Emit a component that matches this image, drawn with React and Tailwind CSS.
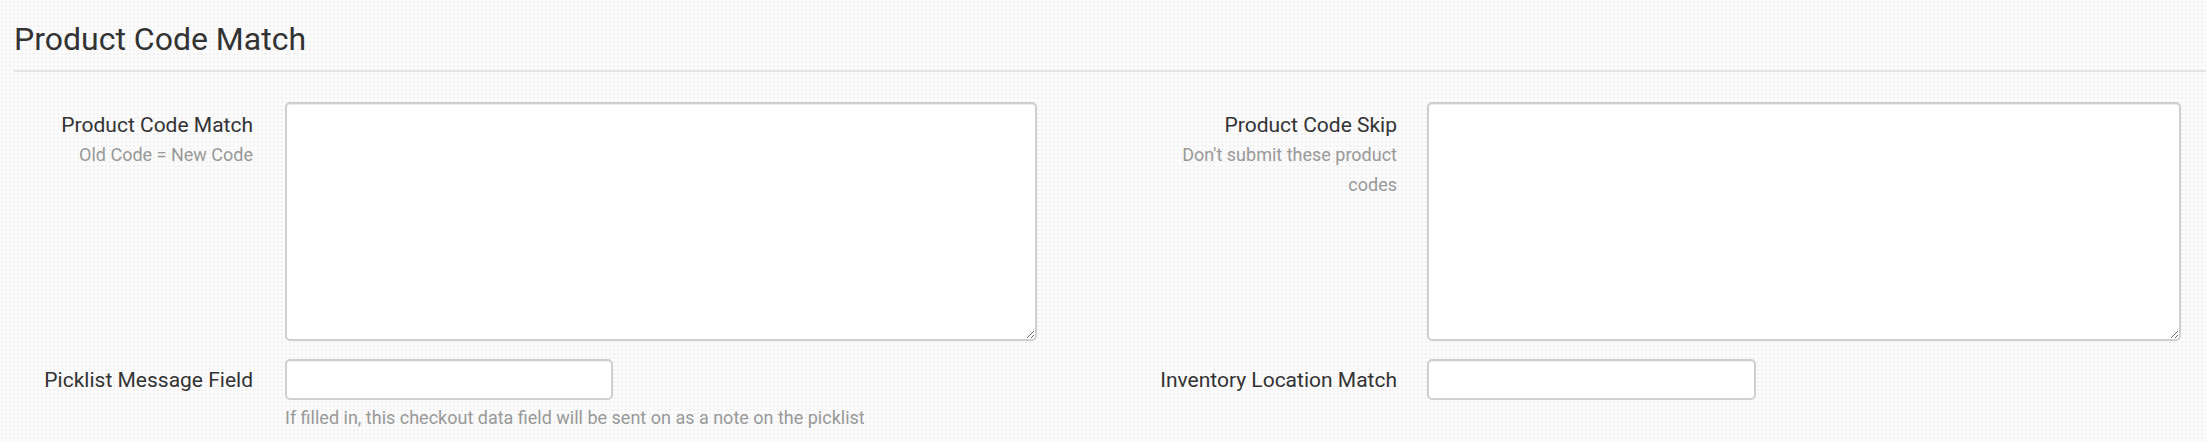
export default function App() {
  return (
    <div
      className="h-screen overflow-hidden bg-[#fbfbfb] bg-[radial-gradient(#f1f1f1_1px,transparent_1px)] bg-[length:4px_4px] text-[#333] pl-[14px] pt-[20px]"
      style={{ fontFamily: 'Roboto, "Liberation Sans", sans-serif' }}
    >
      {/* Section header */}
      <h2 className="text-[32px] leading-[38px] font-normal pb-[12px] border-b-2 border-[#e3e3e3]">
        Product Code Match
      </h2>

      {/* Row 1: textareas */}
      <div className="flex items-start mt-[30px]">
        <div className="w-[239px] text-right pt-[8px]">
          <p className="text-[21px] leading-[30px]">Product Code Match</p>
          <p className="text-[18px] leading-[30px] text-[#999]">Old Code = New Code</p>
        </div>
        <textarea className="ml-[32px] w-[752px] h-[239px] bg-white border-2 border-[#cfcfcf] rounded-[5px] shadow-[inset_0_1px_1px_rgba(0,0,0,0.075)] outline-none" />

        <div className="ml-[130px] w-[230px] text-right pt-[8px]">
          <p className="text-[21px] leading-[30px]">Product Code Skip</p>
          <p className="text-[18px] leading-[30px] text-[#999]">Don't submit these product codes</p>
        </div>
        <textarea className="ml-[30px] w-[754px] h-[239px] bg-white border-2 border-[#cfcfcf] rounded-[5px] shadow-[inset_0_1px_1px_rgba(0,0,0,0.075)] outline-none" />
      </div>

      {/* Row 2: inputs */}
      <div className="flex items-start mt-[18px]">
        <div className="w-[239px] h-[41px] flex items-center justify-end">
          <span className="text-[21px] leading-[30px]">Picklist Message Field</span>
        </div>
        <div className="ml-[32px] w-[752px]">
          <input
            type="text"
            className="block w-[328px] h-[41px] bg-white border-2 border-[#cfcfcf] rounded-[5px] shadow-[inset_0_1px_1px_rgba(0,0,0,0.075)] outline-none"
          />
          <p className="mt-[3px] text-[18px] leading-[30px] text-[#999]">
            If filled in, this checkout data field will be sent on as a note on the picklist
          </p>
        </div>

        <div className="ml-[130px] w-[230px] h-[41px] flex items-center justify-end">
          <span className="text-[21px] leading-[30px] whitespace-nowrap">Inventory Location Match</span>
        </div>
        <div className="ml-[30px]">
          <input
            type="text"
            className="block w-[329px] h-[41px] bg-white border-2 border-[#cfcfcf] rounded-[5px] shadow-[inset_0_1px_1px_rgba(0,0,0,0.075)] outline-none"
          />
        </div>
      </div>
    </div>
  );
}
